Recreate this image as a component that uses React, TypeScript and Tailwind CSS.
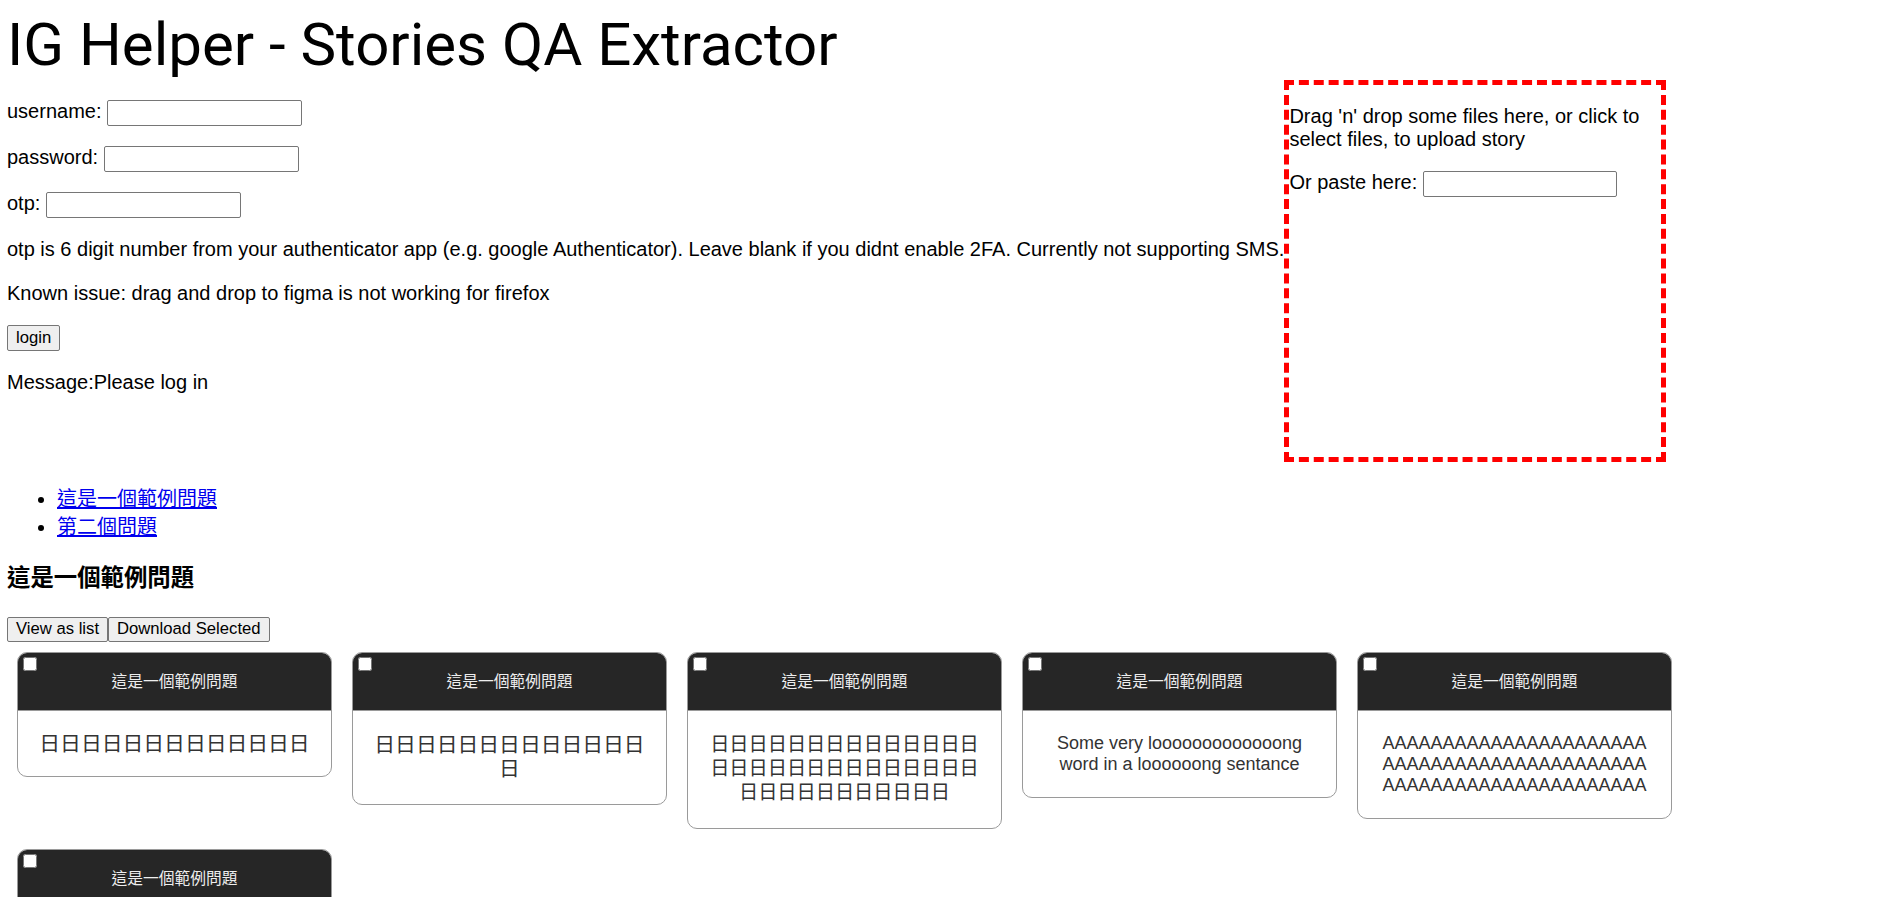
import React from "react";

type Card = {
	title: string;
	body: string;
	textClass: string;
};

const cjk = "日";

// sample questions from the story, each card = one answer
const cards: Card[] = [
	{ title: "這是一個範例問題", body: cjk.repeat(13), textClass: "text-[20.8px] leading-[21px]" },
	{ title: "這是一個範例問題", body: cjk.repeat(14), textClass: "text-[20.8px] leading-[24.5px]" },
	{ title: "這是一個範例問題", body: cjk.repeat(39), textClass: "text-[19.2px] leading-[24.3px]" },
	{
		title: "這是一個範例問題",
		body: "Some very looooooooooooong word in a loooooong sentance",
		textClass: "text-[18px] leading-[21px]",
	},
	{ title: "這是一個範例問題", body: "A".repeat(66), textClass: "text-[18px] leading-[21px] break-all" },
	{ title: "這是一個範例問題", body: cjk.repeat(8), textClass: "text-[20.8px] leading-[21px]" },
];

function Field({ label }: { label: string }) {
	return (
		<p className="my-5">
			{label}{" "}
			<input
				type="text"
				className="inline-block h-[26px] w-[195px] rounded-[2px] border border-[#767676] bg-white px-[2px] align-baseline text-[16.67px] outline-none"
			/>
		</p>
	);
}

function QaCard({ card }: { card: Card }) {
	return (
		<div className="relative m-[10px] w-[315px] overflow-hidden rounded-[10px] border border-[#9a9a9a] bg-white">
			<input
				type="checkbox"
				className="absolute left-[5px] top-[4px] m-0 h-[14px] w-[14px]"
				aria-label="select"
			/>
			<div className="flex h-[58px] items-center justify-center border-b border-[#9a9a9a] bg-[#262626] text-[15.75px] text-[#eeeeee]">
				{card.title}
			</div>
			<div className={`px-[20px] py-[22px] text-center text-[#333333] ${card.textClass}`}>
				{card.body}
			</div>
		</div>
	);
}

export default function App() {
	return (
		<div className="min-h-screen bg-white px-[7px] pt-[10px] font-[family-name:'Liberation_Sans','Noto_Sans_CJK_TC',sans-serif] text-[20px] leading-[23px] text-black">
			<h1 className="m-0 font-[family-name:Roboto,'Liberation_Sans',sans-serif] text-[60px] font-normal leading-[70px]">
				IG Helper - Stories QA Extractor
			</h1>

			<div className="flex items-start">
				<div>
					<Field label="username:" />
					<Field label="password:" />
					<Field label="otp:" />
					<p className="my-5">
						otp is 6 digit number from your authenticator app (e.g. google Authenticator). Leave blank if you
						didnt enable 2FA. Currently not supporting SMS.
					</p>
					<p className="mb-5 mt-[21px]">Known issue: drag and drop to figma is not working for firefox</p>
					<p className="my-5 flex h-[26px]">
						<button
							type="button"
							className="h-[26px] rounded-[2px] border border-[#767676] bg-[#efefef] px-[8px] text-[16.67px] leading-none"
						>
							login
						</button>
					</p>
					<p className="my-5">Message:Please log in</p>
				</div>

				<div className="h-[382px] w-[382px] shrink-0 border-[5px] border-dashed border-[#ff0000]">
					<p className="my-5">Drag 'n' drop some files here, or click to select files, to upload story</p>
					<p className="my-5">
						Or paste here:{" "}
						<input
							type="text"
							className="inline-block h-[26px] w-[194px] rounded-[2px] border border-[#767676] bg-white px-[2px] align-baseline text-[16.67px] outline-none"
						/>
					</p>
				</div>
			</div>

			<ul className="mb-5 mt-[24px] list-disc pl-[50px] leading-[27.5px]">
				<li>
					<a href="#q1" className="text-[#0000ee] underline">
						這是一個範例問題
					</a>
				</li>
				<li>
					<a href="#q2" className="text-[#0000ee] underline">
						第二個問題
					</a>
				</li>
			</ul>

			<h3 className="my-[23.4px] text-[23.4px] font-bold leading-[29px]">這是一個範例問題</h3>

			<div className="flex">
				<button
					type="button"
					className="h-[25px] rounded-[2px] border border-[#767676] bg-[#efefef] px-[8px] text-[16.67px] leading-none"
				>
					View as list
				</button>
				<button
					type="button"
					className="h-[25px] rounded-[2px] border border-[#767676] bg-[#efefef] px-[8px] text-[16.67px] leading-none"
				>
					Download Selected
				</button>
			</div>

			<div className="flex flex-wrap items-start">
				{cards.map((c, i) => (
					<QaCard key={i} card={c} />
				))}
			</div>
		</div>
	);
}
